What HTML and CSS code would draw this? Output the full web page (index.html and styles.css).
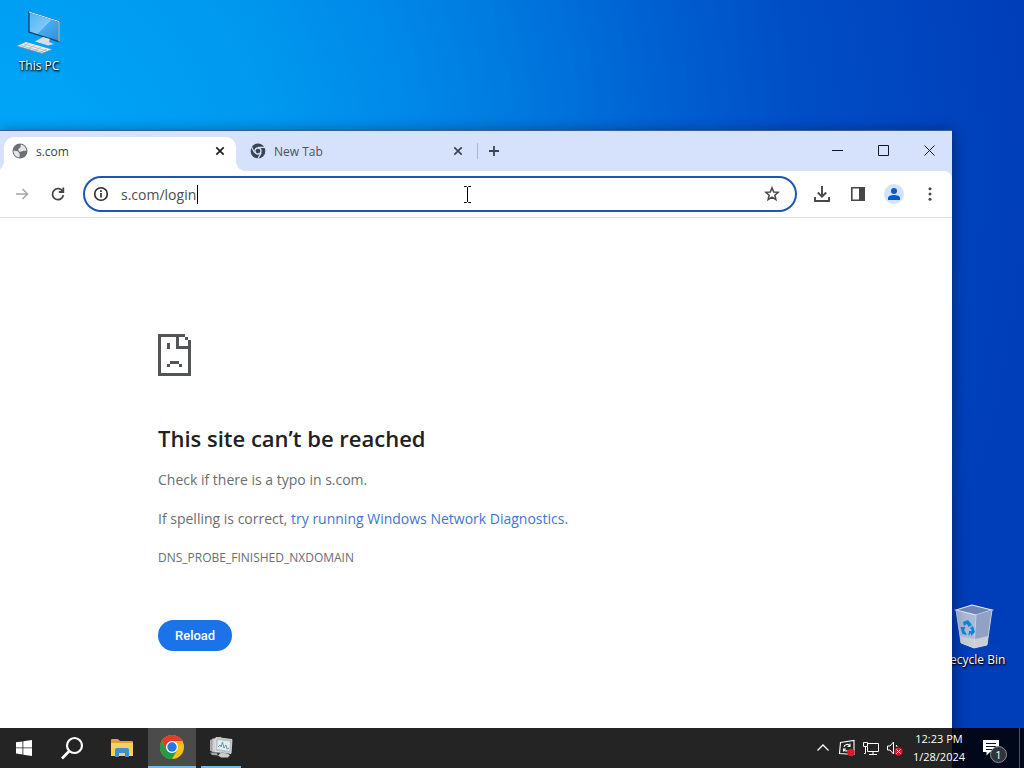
FILE: index.html
```html
<!DOCTYPE html>
<html lang="en">
<head>
<meta charset="utf-8">
<title>s.com</title>
<link rel="stylesheet" href="styles.css">
</head>
<body>
<div class="desktop">
  <a class="shortcut shortcut-pc" href="#">
    <svg width="48" height="48" viewBox="0 0 48 48" aria-hidden="true">
      <defs><linearGradient id="scr" x1="0" y1="0" x2="1" y2="1"><stop offset="0" stop-color="#4fb4f5"/><stop offset=".5" stop-color="#7cc8fa"/><stop offset=".52" stop-color="#48aaf0"/><stop offset="1" stop-color="#2b8fe0"/></linearGradient></defs>
      <path d="M14 4 44 13.500V33.500L14 24z" fill="url(#scr)" stroke="#173d5e" stroke-width="1.300"/>
      <path d="M14 4 44 13.500V33.500" fill="none" stroke="#dcecf7" stroke-width="1"/>
      <path d="M28 29 35 31 34 34 39 36 33 37.500 20 33.500z" fill="#d6dde3"/>
      <path d="M11 34 37 41.500 27 45.500 2 38z" fill="#e9edf0"/>
      <path d="M9 36 32 43M6 37.500 29 44.500M14 35 8 39M20 37 13 41M26 39 19 43M32 41 25 44.500" stroke="#aab5bf" stroke-width=".8" fill="none"/>
      <path d="M2 38 27 45.500 37 41.500" stroke="#7e8a95" stroke-width=".8" fill="none"/>
    </svg>
    <span>This PC</span>
  </a>
  <a class="shortcut shortcut-bin" href="#">
    <svg width="48" height="48" viewBox="0 0 48 48" aria-hidden="true">
      <path d="M6 8 22 3 42 8 37 43 24 46 11 41z" fill="#a9b9d6"/>
      <path d="M6 8 22 3 42 8 26 13z" fill="#6f86b5" stroke="#e2e8f2" stroke-width="1.200"/>
      <path d="M26 13 42 8 37 43 24 46z" fill="#8fa1c4"/>
      <path d="M10 34 25 37 38 34 37 43 24 46 11 41z" fill="#c9cdd4"/>
      <path d="M6 8 11 41 24 46 37 43 42 8M26 13 24 46" fill="none" stroke="#d3dbe9" stroke-width=".8"/>
      <path d="M13 20 18 18 22 23 18.500 25 17 22 14 24zM10.500 25 15.500 25 14 28 17 33 12.500 32zM23 24 25 30 21 34V31L18.500 34 19 29 22 29 20 26z" fill="#0b85dc"/>
    </svg>
    <span>Recycle Bin</span>
  </a>

  <main class="window">
    <header class="titlebar">
      <div class="tabs" role="tablist">
        <div class="tab tab-active" role="tab" aria-selected="true">
          <svg width="16" height="16" viewBox="0 0 16 16" aria-hidden="true"><circle cx="8" cy="8" r="7.500" fill="#6c7074"/><path d="M1.500 7.500C3.500 8 5.500 7.500 6.500 9S8 10.500 7.500 14.300C4 14.300 1.500 11.500 1.500 7.500zM9 1.600C8 3 9.500 3.500 8 4.800S6 5.500 6.500 7.500 9 8.500 11 8 13.500 8.500 14.300 7.500C14 4.500 12 2 9 1.600z" fill="#e4e6e8"/></svg>
          <span class="tab-title">s.com</span>
          <button class="tab-close" aria-label="Close s.com"><svg width="10" height="10" viewBox="0 0 10 10"><path d="M1.300 1.300 8.700 8.700M8.700 1.300 1.300 8.700"/></svg></button>
        </div>
        <div class="tab" role="tab" aria-selected="false">
          <svg width="16" height="16" viewBox="0 0 16 16" fill="none" aria-hidden="true"><circle cx="8" cy="8" r="7.400" fill="#3c4454"/><path d="M8 4.300H15M4.800 9.850 1.300 3.800M11.200 9.850 7.700 15.900" stroke="#d6e2fb" stroke-width="1.200"/><circle cx="8" cy="8" r="3" fill="#3c4454" stroke="#d6e2fb" stroke-width="1.300"/></svg>
          <span class="tab-title">New Tab</span>
          <button class="tab-close" aria-label="Close New Tab"><svg width="10" height="10" viewBox="0 0 10 10"><path d="M1.300 1.300 8.700 8.700M8.700 1.300 1.300 8.700"/></svg></button>
        </div>
        <span class="tab-divider"></span>
        <button class="new-tab" aria-label="New tab"><svg width="12" height="12" viewBox="0 0 12 12"><path d="M6 1V11M1 6H11"/></svg></button>
      </div>
      <div class="window-controls">
        <button aria-label="Minimize"><svg width="11" height="11" viewBox="0 0 11 11"><path d="M0 5.500H11"/></svg></button>
        <button aria-label="Maximize"><svg width="11" height="11" viewBox="0 0 11 11"><path d="M.5.5H10.500V10.500H.5z"/></svg></button>
        <button aria-label="Close"><svg width="11" height="11" viewBox="0 0 11 11"><path d="M.5.5 10.500 10.500M10.500.5.5 10.500"/></svg></button>
      </div>
    </header>

    <div class="toolbar">
      <button class="tool tool-muted" aria-label="Forward"><svg width="16" height="16" viewBox="0 0 16 16"><path d="M2 8H13M8.500 3 13.500 8 8.500 13" stroke-width="1.500"/></svg></button>
      <button class="tool" aria-label="Reload page"><svg width="16" height="16" viewBox="0 0 16 16"><path d="M12.800 5.500A5.500 5.500 0 1 0 13.400 9.200M13.300 1.500V6H8.800" stroke-width="1.800"/></svg></button>
      <div class="omnibox">
        <svg width="16" height="16" viewBox="0 0 16 16" aria-hidden="true"><circle cx="8" cy="8" r="6.300" fill="none" stroke="#27292c" stroke-width="1.600"/><path d="M8 7V11.500M8 4.300V6" stroke="#27292c" stroke-width="1.600"/></svg>
        <input class="address" type="text" value="s.com/login" aria-label="Address">
        <span class="caret"></span>
        <button class="bookmark" aria-label="Bookmark this tab"><svg width="16" height="16" viewBox="0 0 16 16"><path d="M8 1.800 9.700 6 14.200 6.300 10.800 9.200 11.900 13.700 8 11.200 4.100 13.700 5.200 9.200 1.800 6.300 6.300 6z" stroke-width="1.500"/></svg></button>
      </div>
      <button class="tool" aria-label="Downloads"><svg width="18" height="18" viewBox="0 0 18 18"><path d="M9 1V11.500M4.800 7.500 9 11.700 13.200 7.500M2 12V16H16V12" stroke-width="1.900"/></svg></button>
      <button class="tool" aria-label="Side panel"><svg width="16" height="16" viewBox="0 0 16 16"><path d="M1.800 1.800H14.200V14.200H1.800z" stroke-width="1.600"/><path d="M9 1.500H14.500V14.500H9z" fill="#474747" stroke="none"/></svg></button>
      <button class="tool" aria-label="Profile"><svg width="20" height="20" viewBox="0 0 20 20"><circle cx="10" cy="10" r="10" fill="#d3e3fd" stroke="none"/><circle cx="10" cy="7" r="3" fill="#0b57d0" stroke="none"/><path d="M4 16V14C4 12 7 11 10 11S16 12 16 14V16z" fill="#0b57d0" stroke="none"/></svg></button>
      <button class="tool" aria-label="Menu"><svg width="16" height="16" viewBox="0 0 16 16"><g fill="#474747" stroke="none"><circle cx="8" cy="2.700" r="1.500"/><circle cx="8" cy="8" r="1.500"/><circle cx="8" cy="13.300" r="1.500"/></g></svg></button>
    </div>

    <section class="page">
      <svg class="sad-page" width="33" height="42" viewBox="0 0 33 42" aria-hidden="true"><path fill="#535457" fill-rule="evenodd" d="M0 0H27V3H30V6H33V42H0zM3 3V39H30V15H18V3zM21 3V12H30V6H27V3zM9 9H12V15H9zM12 27H21V30H12zM9 30H12V33H9zM21 30H24V33H21z"/></svg>
      <h1>This site can’t be reached</h1>
      <p>Check if there is a typo in s.com.</p>
      <p>If spelling is correct, <a href="#">try running Windows Network Diagnostics.</a></p>
      <div class="error-code">DNS_PROBE_FINISHED_NXDOMAIN</div>
      <button class="reload">Reload</button>
    </section>
  </main>

  <svg class="pointer" width="9" height="17" viewBox="0 0 9 17" aria-hidden="true"><path d="M1 .5H3.500L4.500 1.500 5.500.5H8M4.500 1.500V15.500M1 16.500H3.500L4.500 15.500 5.500 16.500H8" fill="none" stroke="#000"/></svg>

  <footer class="taskbar">
    <button class="task" aria-label="Start"><svg width="16" height="16" viewBox="0 0 16 16"><path fill="#fff" d="M0 2.300 6.500 1.400V7.500H0zM7.300 1.300 16 0V7.500H7.300zM0 8.300H6.500V14.500L0 13.600zM7.300 8.300H16V16L7.300 14.700z"/></svg></button>
    <button class="task" aria-label="Search"><svg width="24" height="24" viewBox="0 0 24 24" fill="none" stroke="#fff"><circle cx="14.500" cy="9.500" r="7.500" stroke-width="2.200"/><path d="M9.300 15 2 22.500" stroke-width="2.600"/></svg></button>
    <button class="task task-files" aria-label="File Explorer"><svg width="22" height="20" viewBox="0 0 22 20"><path d="M0 2Q0 1 1 1H7L9 3H21Q22 3 22 4V18H0z" fill="#e0a234"/><path d="M0 5H22V18H0z" fill="#f8cf62"/><path d="M4 19V12Q4 10 6 10H16Q18 10 18 12V19H14V15H8V19z" fill="#3c91d0"/></svg></button>
    <button class="task task-current" aria-label="Google Chrome"><svg width="24" height="24" viewBox="0 0 24 24"><circle cx="12" cy="12" r="12" fill="#fbc116"/><path d="M1.600 6A12 12 0 0 1 22.400 6H12L6.800 15z" fill="#e33b2e"/><path d="M1.600 6A12 12 0 0 0 12 24L17.200 15 6.800 15z" fill="#229a49"/><circle cx="12" cy="12" r="6" fill="#fff"/><circle cx="12" cy="12" r="4.700" fill="#2577e8"/></svg></button>
    <button class="task task-running" aria-label="Resource Monitor"><svg width="24" height="24" viewBox="0 0 24 24"><path d="M1 5 7 3V17L1 16z" fill="#a9adaf"/><path d="M3 4 12 2V18L3 17z" fill="#cdd1d2" stroke="#85898b" stroke-width=".6"/><path d="M7 2.500 23 4.500 22 18.500 6 16z" fill="#b9bfc1" stroke="#e4e7e7" stroke-width=".8"/><path d="M9 5 21 6.500 20.500 16 8 14z" fill="#e3edf0"/><path d="M9 12 11 10 12 12 13.500 7 15 13 17 10 18 14 20 13" fill="none" stroke="#4f94a6" stroke-width=".9"/><path d="M12 17.500 18 18.500 21 20 19 22.500H12L9 20.500z" fill="#c9cdce"/><path d="M1 17.500 8 18 9 20.500 3 20z" fill="#9fa4a6"/></svg></button>
    <div class="tray">
      <button class="tray-item" aria-label="Show hidden icons"><svg width="16" height="16" viewBox="0 0 16 16" fill="none" stroke="#fff"><path d="M2.500 10.500 8 5 13.500 10.500" stroke-width="1.300"/></svg></button>
      <button class="tray-item" aria-label="Update"><svg width="18" height="18" viewBox="0 0 18 18" fill="none" stroke="#fff"><path d="M2.500 3.500 16 1.500V15.500L1.500 14.500z" stroke-width="1.100"/><path d="M6 8C6.500 5 10.500 4.500 11.500 7M12 4.500V7.500H9.500M5.500 12.500V10H8M5.800 10.500C6.500 12 8 12.500 9.500 11.500" stroke-width="1.100"/><circle cx="13" cy="13.500" r="3.700" fill="#e0192b" stroke="none"/></svg></button>
      <button class="tray-item" aria-label="Network"><svg width="18" height="18" viewBox="0 0 18 18" fill="none" stroke="#fff"><path d="M6 4.500H16.500V12.500H5.500V8M11 12.500V15.500M7 15.500H15M1.500 3.500H5.500V7.500H1.500zM3.500 7.500V14.500H2"/></svg></button>
      <button class="tray-item" aria-label="Volume muted"><svg width="18" height="18" viewBox="0 0 18 18" fill="none" stroke="#fff"><path d="M1.500 7H4L7.500 3V15L4 11H1.500z"/><path d="M10 6Q11 7 11 8"/><circle cx="12.500" cy="12.500" r="4" fill="#d71c2b" stroke="none"/><path d="M10.500 10.500 14.500 14.500M14.500 10.500 10.500 14.500"/></svg></button>
      <time class="clock"><span>12:23 PM</span><span>1/28/2024</span></time>
      <button class="notifications" aria-label="1 new notification"><svg width="16" height="16" viewBox="0 0 16 16"><path d="M0 0H16V12H7L3.500 15.500V12H0z" fill="#fff"/><path d="M3 3.500H13M3 6.500H13M3 9.500H9" stroke="#0a142b"/></svg><span class="badge">1</span></button>
      <button class="show-desktop" aria-label="Show desktop"></button>
    </div>
  </footer>
</div>
</body>
</html>
```
FILE: styles.css
```css
* {
  box-sizing: border-box;
}

body {
  margin: 0;
  font-family: "Open Sans", "Noto Sans", sans-serif;
  font-size: 12px;
}

button {
  display: flex;
  align-items: center;
  justify-content: center;
  padding: 0;
  border: 0;
  background: none;
  font: inherit;
  color: inherit;
}

svg {
  flex: none;
}

.desktop {
  position: relative;
  height: 100vh;
  overflow: hidden;
  background: radial-gradient(circle at 0 170px, #00a8fa 0, #0099ef 270px, #0089e8 410px, #0078de 530px, #0062d2 660px, #004ec6 800px, #003db8 1040px);
}

.shortcut {
  position: absolute;
  display: flex;
  flex-direction: column;
  align-items: center;
  width: 76px;
  color: #fff;
  line-height: 16px;
  text-decoration: none;
  text-shadow: 1px 1px 2px #000, 0 1px 2px #000;
}

.shortcut span {
  margin-top: 2px;
}

.shortcut-pc {
  left: 1px;
  top: 8px;
}

.shortcut-bin {
  right: 12px;
  bottom: 100px;
}

/* Browser window */
.window {
  position: absolute;
  inset: 130px 72px 0 0;
  display: flex;
  flex-direction: column;
  border-top: 1px solid #3b5c8c;
  background: linear-gradient(#d6e2fb 60px, #fff 60px);
  box-shadow: 0 2px 14px rgba(0, 0, 0, .45);
}

.titlebar {
  display: flex;
  justify-content: space-between;
  height: 40px;
}

.tabs {
  display: flex;
  align-items: stretch;
  padding: 6px 0 0 4px;
}

.tab {
  display: flex;
  align-items: center;
  gap: 8px;
  width: 238px;
  padding: 0 10px 6px 12px;
  color: #4a5262;
  stroke: #3c4454;
}

.tab > svg {
  stroke: none;
}

.tab-active {
  position: relative;
  width: 232px;
  padding-left: 8px;
  border-radius: 10px 10px 0 0;
  background: #fff;
  color: #3c3f43;
  stroke: #1f1f1f;
}

.tab-active::before,
.tab-active::after {
  content: "";
  position: absolute;
  bottom: 0;
  width: 10px;
  height: 10px;
}

.tab-active::before {
  right: 100%;
  background: radial-gradient(circle at 0 0, transparent 10px, #fff 10px);
}

.tab-active::after {
  left: 100%;
  background: radial-gradient(circle at 100% 0, transparent 10px, #fff 10px);
}

.tab + .tab {
  padding-left: 14px;
}

.tab-title {
  flex: 1;
}

.tab-close {
  width: 12px;
  height: 16px;
}

.tab-close svg {
  stroke-width: 1.7;
}

.tab-divider {
  width: 1px;
  height: 16px;
  margin: 6px 9px 0 3px;
  background: #a8b9d8;
}

.new-tab {
  width: 14px;
  height: 28px;
  stroke: #3c4454;
  stroke-width: 1.8;
}

.window-controls {
  display: flex;
}

.window-controls button {
  width: 46px;
  height: 38px;
  fill: none;
  stroke: #101725;
}

.toolbar {
  display: flex;
  align-items: center;
  gap: 16px;
  height: 47px;
  padding: 0 12px;
  border-bottom: 1px solid #dfe1e5;
  border-top-right-radius: 8px;
  background: #fff;
}

.tool {
  width: 20px;
  height: 28px;
  fill: none;
  stroke: #474747;
}

.tool-muted {
  stroke: #a6a6a6;
}

.omnibox {
  display: flex;
  flex: 1;
  align-items: center;
  height: 36px;
  margin: 0 -1px;
  padding: 0 15px 0 8px;
  border: 2px solid #1d57b5;
  border-radius: 18px;
}

.address {
  width: 76px;
  height: 24px;
  margin-left: 12px;
  padding: 0;
  border: 0;
  outline: 0;
  background: none;
  font: inherit;
  font-size: 14px;
  color: #4a4d51;
}

.caret {
  width: 1px;
  height: 19px;
  background: #000;
}

.bookmark {
  width: 16px;
  height: 24px;
  margin-left: auto;
  fill: none;
  stroke: #474747;
}

.pointer {
  position: absolute;
  left: 463px;
  top: 186px;
}

/* Error page */
.page {
  display: flex;
  flex-direction: column;
  align-items: flex-start;
  padding: 116px 0 0 158px;
  color: #6a6d71;
  font-size: 14px;
  line-height: 24px;
}

.page h1 {
  margin: 48px 0 15px;
  color: #202124;
  font-size: 22px;
  font-weight: 600;
  line-height: 29px;
}

.page p {
  margin: 0 0 15px;
}

.page a {
  color: #3f74d4;
  text-decoration: none;
}

.error-code {
  font-size: 12px;
}

.reload {
  height: 31px;
  margin-top: 50px;
  padding: 0 17px;
  border-radius: 16px;
  background: #1a73e8;
  color: #fff;
  font-family: Roboto, sans-serif;
  font-size: 13px;
  font-weight: 500;
}

/* Taskbar */
.taskbar {
  position: absolute;
  inset: auto 0 0 0;
  display: flex;
  height: 40px;
  background: rgba(0, 0, 0, .86);
  color: #fff;
}

.task {
  width: 48px;
}

.task-files {
  width: 52px;
}

.task-current {
  border-bottom: 2px solid #76b9ed;
  background: #4b4b4b;
}

.task-running {
  width: 40px;
  margin-left: 5px;
  border-bottom: 2px solid #76b9ed;
}

.tray {
  display: flex;
  margin-left: auto;
}

.tray-item {
  width: 24px;
}

.clock {
  display: flex;
  flex-direction: column;
  align-items: center;
  justify-content: center;
  width: 64px;
  line-height: 18px;
  font-size: 11px;
}

.notifications {
  position: relative;
  width: 48px;
  padding-right: 8px;
}

.badge {
  position: absolute;
  left: 19px;
  top: 18px;
  width: 17px;
  height: 17px;
  border: 1px solid #8b9099;
  border-radius: 50%;
  background: #30343d;
  font-size: 11px;
  line-height: 15px;
  text-align: center;
}

.show-desktop {
  width: 5px;
  border-left: 1px solid #4b5262;
}
```
